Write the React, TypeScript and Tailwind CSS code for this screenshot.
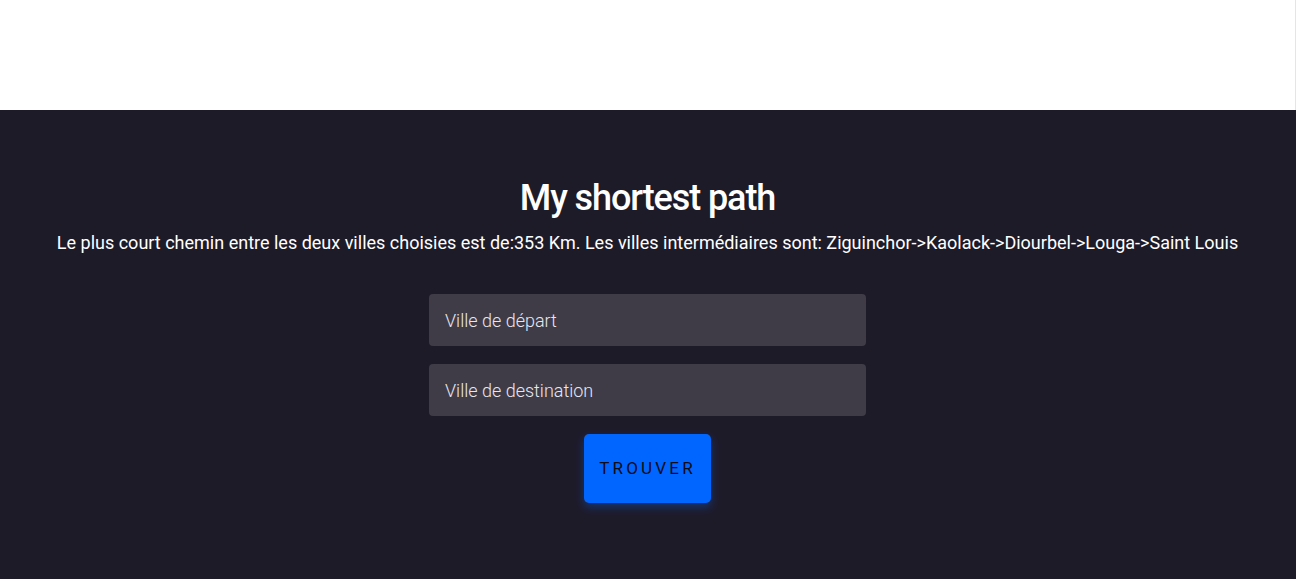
export default function App() {
    return (
        <div className="min-h-screen bg-[#1e1b29] font-['Roboto',sans-serif]">
            <div className="h-[110px] bg-white border-r border-[#e5e5e5]" />
            <div className="flex flex-col items-center pt-[68px] pb-[76px] pr-px">
                <h1 className="text-[36px] font-medium text-white tracking-[-1.1px] leading-[40px]">My shortest path</h1>
                <p className="mt-[13px] text-[18px] text-white leading-[24px]">
                    Le plus court chemin entre les deux villes choisies est de:353 Km. Les villes intermédiaires sont: Ziguinchor-&gt;Kaolack-&gt;Diourbel-&gt;Louga-&gt;Saint Louis
                </p>
                <form className="mt-[39px] flex flex-col items-center gap-[18px]" onSubmit={e => e.preventDefault()}>
                    <input
                        type="text"
                        placeholder="Ville de départ"
                        className="w-[437px] h-[52px] rounded-[4px] bg-[#3f3c48] px-4 text-[18px] font-light text-white placeholder:text-[#e8e6f0] outline-none"
                    />
                    <input
                        type="text"
                        placeholder="Ville de destination"
                        className="w-[437px] h-[52px] rounded-[4px] bg-[#3f3c48] px-4 text-[18px] font-light text-white placeholder:text-[#e8e6f0] outline-none"
                    />
                    <button
                        type="submit"
                        className="w-[127px] h-[69px] rounded-[5px] bg-[#0066ff] text-[17px] tracking-[3.2px] text-[#0d0b16] shadow-[0_4px_10px_rgba(0,102,255,0.35)]"
                    >
                        TROUVER
                    </button>
                </form>
            </div>
        </div>
    );
}
